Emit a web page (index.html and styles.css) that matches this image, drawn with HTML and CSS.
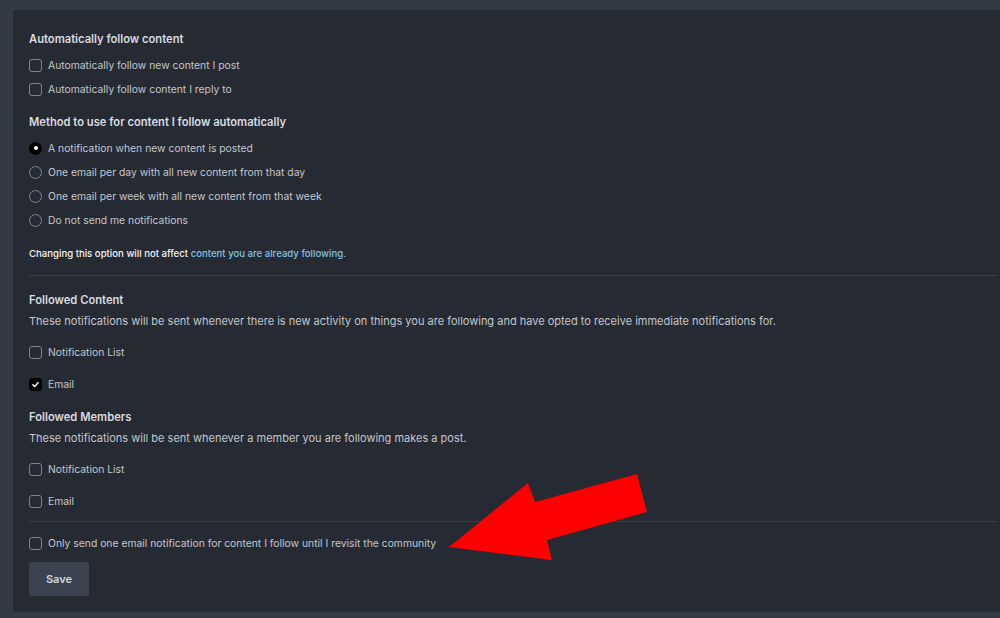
FILE: index.html
```html
<!DOCTYPE html>
<html>
<head>
<meta charset="utf-8">
<link rel="stylesheet" href="styles.css">
</head>
<body>
<div class="panel">
  <div class="heading">Automatically follow content</div>
  <div class="opts tight">
    <label class="opt"><span class="cb"></span><span>Automatically follow new content I post</span></label>
    <label class="opt"><span class="cb"></span><span>Automatically follow content I reply to</span></label>
  </div>
  <div class="heading h2">Method to use for content I follow automatically</div>
  <div class="opts tight">
    <label class="opt"><span class="rd on"></span><span>A notification when new content is posted</span></label>
    <label class="opt"><span class="rd"></span><span>One email per day with all new content from that day</span></label>
    <label class="opt"><span class="rd"></span><span>One email per week with all new content from that week</span></label>
    <label class="opt"><span class="rd"></span><span>Do not send me notifications</span></label>
  </div>
  <p class="note">Changing this option will not affect <a class="link">content you are already following.</a></p>
  <hr class="div1">
  <div class="heading h3">Followed Content</div>
  <p class="desc">These notifications will be sent whenever there is new activity on things you are following and have opted to receive immediate notifications for.</p>
  <div class="opts loose">
    <label class="opt"><span class="cb"></span><span>Notification List</span></label>
    <label class="opt"><span class="cb on"><svg viewBox="0 0 13 13" width="13" height="13"><path d="M3.4 6.8 L5.5 8.8 L9.6 4.4" fill="none" stroke="#fff" stroke-width="1.8" stroke-linecap="round" stroke-linejoin="round"/></svg></span><span>Email</span></label>
  </div>
  <div class="heading h4">Followed Members</div>
  <p class="desc">These notifications will be sent whenever a member you are following makes a post.</p>
  <div class="opts loose">
    <label class="opt"><span class="cb"></span><span>Notification List</span></label>
    <label class="opt"><span class="cb"></span><span>Email</span></label>
  </div>
  <hr class="div2">
  <label class="opt last"><span class="cb"></span><span>Only send one email notification for content I follow until I revisit the community</span></label>
  <button class="save">Save</button>
</div>
<svg class="arrow" width="1000" height="618" viewBox="0 0 1000 618">
  <polygon points="449,547 528,483 535,502 637,474 647,512 547,540 552,560" fill="#ff0000"/>
</svg>
</body>
</html>
```

FILE: styles.css
```css
html, body {
  margin: 0;
  padding: 0;
}
body {
  background: #343a44;
  width: 1000px;
  height: 618px;
  overflow: hidden;
  position: relative;
  font-family: Inter, "Liberation Sans", sans-serif;
  font-size: 10.35px;
  color: #c3c7cd;
}
.panel {
  margin: 10px 0 0 13px;
  width: 1000px;
  background: #262a32;
  padding: 21px 16px 16px 16px;
  box-sizing: border-box;
  border-radius: 3px 0 0 3px;
}
.heading {
  line-height: 16px;
  font-size: 11.2px;
  font-weight: 600;
  color: #d9dce1;
}
.opts {
  display: flex;
  flex-direction: column;
}
.tight { margin-top: 6px; }
.loose { gap: 8px; }
.opt {
  display: flex;
  align-items: center;
  gap: 6px;
  height: 24px;
  line-height: 16px;
}
.cb, .rd {
  width: 13px;
  height: 13px;
  box-sizing: border-box;
  border: 1px solid #80858d;
  border-radius: 3px;
  flex: none;
  display: flex;
  align-items: center;
  justify-content: center;
}
.rd { border-radius: 50%; }
.cb.on { background: #000; border-color: #000; }
.rd.on { background: #000; border-color: #000; }
.rd.on::after {
  content: "";
  width: 4px;
  height: 4px;
  border-radius: 50%;
  background: #fff;
}
.h2 { margin-top: 13px; }
.note {
  margin: 14px 0 0;
  line-height: 16px;
  font-size: 9.6px;
  font-weight: 500;
  color: #f2f4f6;
}
.link { color: #7fc3e6; }
.div1, .div2 {
  border: 0;
  height: 1px;
  background: #383e48;
  margin: 13px 0 0;
}
.h3 { margin-top: 16px; }
.desc {
  margin: 5px 0 0;
  line-height: 16px;
  font-size: 11px;
}
.desc + .loose { margin-top: 11px; }
.h4 { margin-top: 13px; }
.div2 { margin-top: 8px; }
.last { margin-top: 9px; }
.save {
  display: block;
  margin-top: 7px;
  width: 60px;
  height: 34px;
  border: 0;
  border-radius: 3px;
  background: #3b4350;
  color: #d3d7dc;
  font-family: inherit;
  font-size: 11px;
  font-weight: 600;
  padding: 0;
}
.arrow {
  position: absolute;
  left: 0;
  top: 0;
  pointer-events: none;
}
```
